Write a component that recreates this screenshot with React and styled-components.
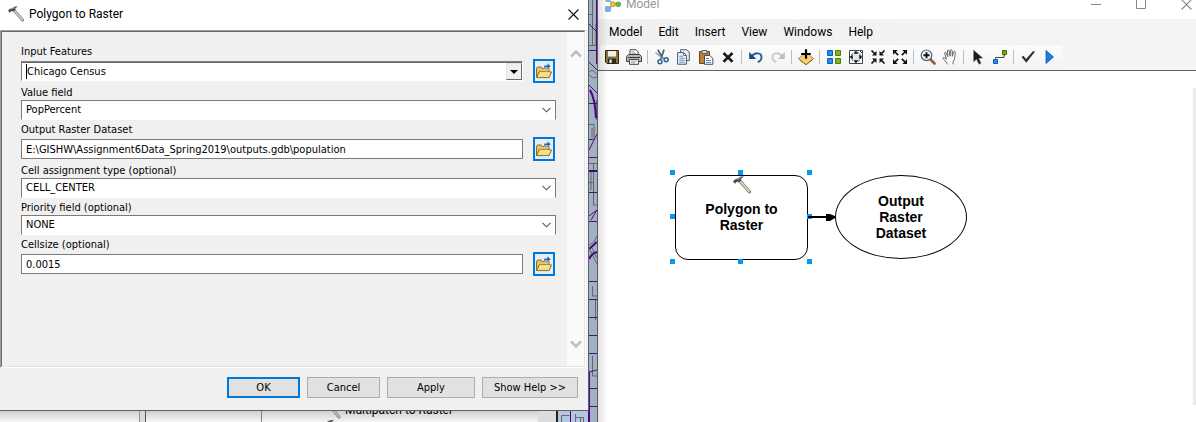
import React from "react";
import styled, { createGlobalStyle, css } from "styled-components";

const dialogFont = `"DejaVu Sans Condensed", "DejaVu Sans", Tahoma, sans-serif`;
const shellFont = `Roboto, "Segoe UI", sans-serif`;

const GlobalStyle = createGlobalStyle`
  *, *::before, *::after { box-sizing: border-box; }
  body { margin: 0; background: #fff; color: #000; font: 12px/16px ${shellFont}; }
  button, input, select { font: inherit; color: inherit; margin: 0; border-radius: 0; }
  svg { display: block; flex: none; }
`;

/* ---------- desktop ---------- */

const Desktop = styled.main`
  display: grid;
  grid-template-columns: minmax(0, 589fr) 9px minmax(0, 598fr);
  min-height: 100vh;
  overflow: hidden;
`;

const LeftPane = styled.div`
  display: flex;
  flex-direction: column;
  min-width: 0;
`;

const MapEdge = styled.div`
  position: relative;
  overflow: hidden;
  background: #a0b1c6;
  border-right: 1px solid #5c5c5c;
`;

const MapLines = styled.svg`
  position: absolute;
  inset: 0 auto auto 0;
`;

/* ---------- dialog ---------- */

const Dialog = styled.section`
  flex: 1;
  display: flex;
  flex-direction: column;
  background: #f0f0f0;
  border-right: 1px solid #5f6166;
  border-bottom: 1px solid #5f6166;
  font: 11px/14px ${dialogFont};
`;

const DialogTitleBar = styled.header`
  display: flex;
  align-items: center;
  gap: 5px;
  height: 30px;
  padding: 0 5px 2px 8px;
  background: #fff;
  font: 12px/16px ${shellFont};
`;

const DialogTitle = styled.h1`
  flex: 1;
  margin: 0;
  font: inherit;
`;

const CloseButton = styled.button`
  display: grid;
  place-items: center;
  width: 20px;
  height: 20px;
  padding: 0;
  border: 0;
  background: none;
`;

const DialogBody = styled.div`
  flex: 1;
  display: flex;
  margin-right: 2px;
  border: 1px solid;
  border-color: #a0a0a0 #fff #fff #a0a0a0;
`;

const DialogInset = styled.div`
  flex: 1;
  display: flex;
  border: 1px solid;
  border-color: #696969 #e3e3e3 #e3e3e3 #696969;
`;

const Form = styled.form`
  flex: 1;
  display: flex;
  flex-direction: column;
  gap: 3px;
  min-width: 0;
  padding: 13px 11px 16px 19px;
`;

const ScrollTrack = styled.div`
  display: flex;
  flex-direction: column;
  justify-content: space-between;
  align-items: center;
  width: 17px;
  padding: 17px 0;
  background: #fafafa;
`;

const Field = styled.div`
  display: flex;
  flex-direction: column;
`;

const Label = styled.label`
  height: 14px;
`;

const Row = styled.div`
  display: flex;
  align-items: center;
  gap: 10px;
  padding-right: 1px;
`;

const boxStyles = css`
  flex: 1;
  min-width: 0;
  height: 20px;
  padding: 0 4px;
  background: #fff;
  outline: 0;
`;

const TextBox = styled.input`
  ${boxStyles}
  border: 1px solid #7a7a7a;
`;

const ComboFrame = styled.div`
  flex: 1;
  display: flex;
  min-width: 0;
  height: 20px;
  border: 1px solid;
  border-color: #808080 #fff #fff #808080;
  background: #fff;
`;

const ComboInner = styled.div`
  flex: 1;
  display: flex;
  min-width: 0;
  border-top: 1px solid #696969;
`;

const Caret = styled.span`
  width: 1px;
  margin: 1px 0 1px 4px;
  background: #000;
`;

const ComboInput = styled.input`
  flex: 1;
  min-width: 0;
  padding: 0;
  border: 0;
  outline: 0;
  background: transparent;
`;

const ComboButton = styled.button`
  display: grid;
  place-items: center;
  width: 16px;
  padding: 0;
  border: 1px solid;
  border-color: #e3e3e3 #696969 #696969 #e3e3e3;
  background: #f0f0f0;
`;

const SelectFrame = styled.div`
  display: grid;
  align-items: center;
  height: 20px;

  & > * { grid-area: 1 / 1; }
  & > svg { justify-self: end; margin-right: 5px; pointer-events: none; }
`;

const Select = styled.select`
  ${boxStyles}
  appearance: none;
  width: 100%;
  border: 1px solid #7a7a7a;
  border-bottom-color: #fff;
`;

const BrowseButton = styled.button`
  display: grid;
  place-items: center;
  width: 22px;
  height: 24px;
  padding: 0;
  border: 2px solid #0078d7;
  background: #e5eef7;
`;

const DialogFooter = styled.footer`
  display: flex;
  justify-content: flex-end;
  gap: 7px;
  padding: 9px 10px 12px;
`;

const DialogButton = styled.button`
  width: ${({ $size }) => ({ small: 73, medium: 88, large: 96 })[$size]}px;
  height: 21px;
  padding: 0;
  border: ${({ $primary }) => ($primary ? "2px solid #0078d7" : "1px solid #adadad")};
  background: #e1e1e1;
`;

/* ---------- catalog tree behind the dialog ---------- */

const TreeStrip = styled.div`
  display: grid;
  grid-template-columns: 140fr 6fr 116fr 276fr 20fr 31fr;
  height: 11px;
  overflow: hidden;
  background: linear-gradient(#cfcfcf, #f6f6f6);
`;

const TreeCell = styled.div`
  display: flex;
  align-items: flex-end;
  min-width: 0;
  height: 11px;
  overflow: hidden;
  border-right: ${({ $edge }) => $edge || "0 solid transparent"};
  background: ${({ $fill }) => $fill || "transparent"};
`;

const TreeItem = styled.div`
  display: flex;
  align-items: flex-end;
  gap: 2px;
  padding-left: 64px;
  white-space: nowrap;
`;

const TreeText = styled.span`
  padding-bottom: 4px;
`;

/* ---------- model window ---------- */

const ModelWindow = styled.section`
  position: relative;
  display: flex;
  flex-direction: column;
  min-width: 0;
  background: #fff;

  &::after {
    content: "";
    position: absolute;
    inset: 0 auto 0 0;
    width: 10px;
    background: linear-gradient(to right, rgba(0, 0, 0, 0.11), transparent);
    pointer-events: none;
  }
`;

const ModelTitleClip = styled.header`
  display: flex;
  align-items: flex-end;
  height: 19px;
  overflow: hidden;
`;

const ModelTitleBar = styled.div`
  flex: 1;
  display: flex;
  align-items: center;
  gap: 5px;
  height: 30px;
  padding-left: 7px;
  color: #999;
`;

const ModelTitle = styled.h2`
  flex: 1;
  margin: 0;
  font: inherit;
`;

const WindowButtons = styled.div`
  display: flex;
  gap: 25px;
`;

const MenuBar = styled.nav`
  display: flex;
  align-items: center;
  gap: 16px;
  height: 26px;
  padding-left: 11px;
  background: linear-gradient(to right, #f0f0f0, #f5f5f5);
`;

const MenuItem = styled.button`
  padding: 0;
  border: 0;
  background: none;
`;

const ToolbarBand = styled.div`
  display: flex;
  height: 26px;
  padding-left: 2px;
  border-bottom: 1px solid #646464;
  background: linear-gradient(to right, #f0f0f0, #f5f5f5);
`;

const Toolbar = styled.div`
  display: flex;
  padding: 0 2px 1px 1px;
  align-items: center;
  border-radius: 3px;
  background: linear-gradient(#fcfcfc, #f3f3f3);
`;

const ToolButton = styled.button`
  display: grid;
  place-items: center;
  width: 22px;
  height: 24px;
  padding: 0;
  border: 0;
  background: none;
`;

const Separator = styled.span`
  width: 1px;
  height: 14px;
  margin: 0 3px 0 2px;
  background: #bdbdbd;
`;

const CanvasRow = styled.div`
  flex: 1;
  display: flex;
`;

const Canvas = styled.div`
  position: relative;
  flex: 1;
  min-height: 200px;
  overflow: hidden;
`;

const CanvasScroll = styled.div`
  width: 3px;
  margin: 17px 0;
  background: #ececec;
`;

const Node = styled.div`
  position: absolute;
  top: 104px;
  display: flex;
  flex-direction: column;
  align-items: center;
  border: 1px solid #000;
  font: bold 14px/16px "Liberation Sans", Arial, sans-serif;
  text-align: center;
`;

const ToolNode = styled(Node)`
  left: 77px;
  width: 133px;
  height: 85px;
  gap: 7px;
  border-radius: 13px;
`;

const DataNode = styled(Node)`
  left: 237px;
  width: 132px;
  height: 84px;
  justify-content: center;
  border-radius: 50%;
`;

const NodeText = styled.span`
  width: ${({ $wide }) => ($wide ? 90 : 64)}px;
`;

const Connector = styled.svg`
  position: absolute;
  left: 210px;
  top: 141px;
`;

const Handle = styled.i`
  position: absolute;
  left: ${({ $x }) => $x}px;
  top: ${({ $y }) => $y}px;
  width: 5px;
  height: 5px;
  background: #0a96f5;
`;

/* ---------- drawings ---------- */

const Svg = ({ size = 16, children }) => (
  <svg width={size} height={size} viewBox="0 0 16 16" fill="none" aria-hidden="true">
    {children}
  </svg>
);

const Hammer = ({ size }) => (
  <Svg size={size}>
    <path d="M6.2 4.6 14.6 14" stroke="#8a7f6d" strokeWidth="3" strokeLinecap="round" />
    <path d="M6.4 4.8 14.4 13.7" stroke="#d9cfbd" strokeWidth="1.6" strokeLinecap="round" />
    <path d="M0 4.8 1.6 3l2-.6L6.8.4 10 .5 7.6 2 7 4.4 4.8 5.6 3.6 4.8l-1.8 2z" fill="#4a4d50" />
    <path d="M3.6 3 7 1.4" stroke="#999" />
  </Svg>
);

const Cross = ({ color = "#111" }) => (
  <svg width="11" height="11" viewBox="0 0 11 11" fill="none" aria-hidden="true">
    <path d="m.5.5 10 10m0-10-10 10" stroke={color} strokeWidth="1.1" />
  </svg>
);

const ScrollChevron = ({ down }) => (
  <svg width="12" height="9" viewBox="0 0 12 9" fill="none" aria-hidden="true">
    <path d={down ? "M1 1.5 6 6.5 11 1.5" : "M1 7.5 6 2.5 11 7.5"} stroke="#bfbfbf" strokeWidth="2.6" />
  </svg>
);

const SelectChevron = () => (
  <svg width="9" height="6" viewBox="0 0 9 6" fill="none" aria-hidden="true">
    <path d="m.5.8 4 4 4-4" stroke="#555" strokeWidth="1.1" />
  </svg>
);

const FolderOpen = () => (
  <svg width="18" height="18" viewBox="0 0 18 18" fill="none" aria-hidden="true">
    <path d="M1.500 15.500V6.200l1-1.200h3.600l1.200 1.500h6.700v3" fill="#e2c463" stroke="#8a6d1d" />
    <path d="m1.600 15.600 2.600-5.700h12.300l-2.400 5.700z" fill="#f8dc86" stroke="#8a6d1d" />
    <path d="M4.800 10.900h10" stroke="#fff3c0" />
    <path d="M9 6.500V4.700q0-1.400 1.400-1.400h1.800V1l3.600 3.200-3.600 3V5.200h-1.500v1.300z" fill="#155a9c" stroke="#e5eef7" strokeWidth=".5" />
  </svg>
);

const ModelLogo = () => (
  <Svg>
    <path d="M3 4.5 9 8M3.500 13 9 8.500M9 8h5" stroke="#555" />
    <rect x=".5" y="1" width="5" height="5" rx="1" fill="#7fb2ea" />
    <rect x=".5" y="10.5" width="5" height="5" rx="1" fill="#79b1ec" stroke="#4d88c9" strokeWidth=".6" />
    <circle cx="8" cy="8.2" r="2.5" fill="#f0c243" stroke="#b68613" strokeWidth=".7" />
    <circle cx="13.3" cy="8.3" r="2.4" fill="#69b94b" stroke="#3e8a26" strokeWidth=".7" />
  </Svg>
);

const icons = {
  Save: (
    <Svg>
      <path d="M1.5 1.5h13v13H3l-1.500-1.500z" fill="#8a7840" stroke="#2d2712" />
      <path d="M4 2h8v5.500H4z" fill="#f2f0e6" />
      <path d="M4 9.500h8V14H4z" fill="#2d2a20" />
      <path d="M5.500 10.500h2.200V14H5.500z" fill="#eee" />
    </Svg>
  ),
  Print: (
    <Svg>
      <path d="M4 6V.7h6L12.200 3v3" fill="#fff" stroke="#444" />
      <path d="M5.500 3h3M5.500 4.800h5" stroke="#777" strokeWidth=".8" />
      <path d="M.6 7.500 2.500 5.500h11l2 2V12.500H.6z" fill="#b9b9b9" stroke="#3c3c3c" />
      <path d="M2 8.500h12" stroke="#333" />
      <path d="M3.500 10.500h9v4.800h-9z" fill="#fff" stroke="#444" />
      <path d="M5 12.200h6M5 13.800h4" stroke="#888" strokeWidth=".8" />
      <path d="M12.500 7h1.500" stroke="#d5a62d" />
    </Svg>
  ),
  Cut: (
    <Svg>
      <path d="m3.800.8 5.400 9M10 .8 6.800 10" stroke="#555b63" strokeWidth="1.700" />
      <path d="M1.500 3.500 9.500 10" stroke="#8f969e" strokeWidth="1.300" />
      <circle cx="6" cy="12.800" r="2" stroke="#2b6898" strokeWidth="1.500" />
      <circle cx="12.200" cy="10.800" r="2" stroke="#2b6898" strokeWidth="1.500" />
    </Svg>
  ),
  Copy: (
    <Svg>
      <path d="M4.600.7h6.200l2.500 2.500v8.400H4.600z" fill="#e9f1fa" stroke="#4d6074" />
      <path d="M1.600 3.700h6.200l2.600 2.500v9H1.600z" fill="#fff" stroke="#3f5368" />
      <path d="M3.200 7.200h4M3.200 9.200h5.600M3.200 11.200h5.600M3.200 13.200h5.600" stroke="#5a89ba" />
      <path d="M7.600 4v2.500h2.600" stroke="#3f5368" strokeWidth=".8" />
    </Svg>
  ),
  Paste: (
    <Svg>
      <path d="M1.500 2.500h10v12h-10z" fill="#bd8238" stroke="#704616" />
      <path d="M4 1.500h5v3H4z" fill="#d8d8d8" stroke="#555" strokeWidth=".9" />
      <path d="M6.500 6.500h5.300l3 2.800v6H6.500z" fill="#fff" stroke="#3f5368" />
      <path d="M8 9.500h3M8 11.500h5M8 13.500h5" stroke="#5a89ba" />
    </Svg>
  ),
  Delete: (
    <Svg>
      <path d="m3.500 4 9 8.800M12.500 4l-9 8.800" stroke="#1b1b1b" strokeWidth="2.600" />
    </Svg>
  ),
  Undo: (
    <Svg>
      <path d="M4 7.500C6.500 3 13.500 3.300 13.500 8.200c0 2.500-1.500 4-3.700 5" stroke="#1f5f9e" strokeWidth="1.900" />
      <path d="M1.200 3v7h7z" fill="#134b85" />
    </Svg>
  ),
  Redo: (
    <Svg>
      <path d="M12 7.500C9.500 3 2.500 3.300 2.500 8.200c0 2.500 1.500 4 3.700 5" stroke="#c9c9c9" strokeWidth="1.900" />
      <path d="M14.800 3v7h-7z" fill="#bfbfbf" />
    </Svg>
  ),
  "Add Data": (
    <Svg>
      <path d="M8 3.500 15.600 9.500 8 15.600.4 9.500z" fill="#f5d078" stroke="#b98f38" />
      <path d="M1 10.200 8 15.800 15 10.200" stroke="#8d6a22" />
      <path d="M8 .3v9.400M3.200 5h9.600" stroke="#000" strokeWidth="2.200" />
    </Svg>
  ),
  "Auto Layout": (
    <Svg>
      <path d="M1.500 1.500h5v5h-5zM1.500 9.500h5v5h-5z" fill="#2090f5" stroke="#0a5fb4" />
      <path d="M9.500 1.500h5v5h-5zM9.500 9.500h5v5h-5z" fill="#7dbb13" stroke="#4c7b08" />
    </Svg>
  ),
  "Full Extent": (
    <Svg>
      <path d="M1.500 1.500h10l3 3v10h-13z" fill="#fff" stroke="#444" />
      <circle cx="8" cy="8" r="5" fill="#dfeaf2" stroke="#666" strokeDasharray="2 1.500" />
      <path d="m8 1.800 2.400 2.900H5.600zM8 14.200l2.400-2.900H5.600zM1.800 8l2.900-2.400v4.800zM14.200 8l-2.900-2.400v4.800z" fill="#111" />
      <path d="M12 1.500h2.500V4" stroke="#444" />
    </Svg>
  ),
  "Fixed Zoom In": (
    <Svg>
      <path d="m1.500 1.500 3 3M14.500 1.500l-3 3M1.500 14.500l3-3M14.500 14.500l-3-3" stroke="#111" strokeWidth="1.700" />
      <path d="M6.500 2v4.500H2zM9.500 2v4.500H14zM6.500 14V9.500H2zM9.500 14V9.500H14z" fill="#111" />
    </Svg>
  ),
  "Fixed Zoom Out": (
    <Svg>
      <path d="m3 3 3.200 3.200M13 3 9.800 6.200M3 13l3.200-3.200M13 13 9.800 9.800" stroke="#111" strokeWidth="1.700" />
      <path d="M1 1v4.700L5.700 1zM15 1v4.700L10.300 1zM1 15v-4.700L5.700 15zM15 15v-4.700L10.300 15z" fill="#111" />
    </Svg>
  ),
  Zoom: (
    <Svg>
      <path d="m10.500 10.500 4 4" stroke="#99593e" strokeWidth="2.700" strokeLinecap="round" />
      <circle cx="6.500" cy="6.300" r="5.300" fill="#eef5fa" stroke="#54626d" strokeWidth="1.200" />
      <path d="M6.500 3.300v6M3.500 6.300h6" stroke="#111" strokeWidth="1.900" />
    </Svg>
  ),
  Pan: (
    <Svg>
      <path
        d="M5.500 15.300C4.300 12.500 2.500 11.300 1 9.600c-.3-1.200 1-1.500 2-.6l1.500 1.200L2.600 4.300c-.2-1.200 1.200-1.500 1.700-.3l1.600 3.700L5.400 2c0-1.300 1.600-1.300 1.800 0l.9 5.200.3-5.600c.2-1.200 1.800-1.100 1.800.2l.1 5.600 1.300-4.500c.5-1.100 1.900-.6 1.700.5-.5 3.600-.2 7-2.300 9.400v2.500"
        fill="#fff" stroke="#555" strokeWidth=".9" />
    </Svg>
  ),
  Select: (
    <Svg>
      <path d="M3.500 1v12l3-2.700 2.400 5 2.200-1.100-2.300-4.800 4-.4z" fill="#1c1c1c" stroke="#888" strokeWidth=".5" />
    </Svg>
  ),
  Connect: (
    <Svg>
      <path d="M3.500 10V8.500H12V5" stroke="#444" />
      <path d="M3.500 10V8M12.500 7V5" stroke="#e03030" />
      <path d="M1.500 10.500h4v4h-4z" fill="#2090f5" stroke="#0a5fb4" />
      <path d="M10.500 1.500h4v4h-4z" fill="#6cae12" stroke="#3f6f06" />
    </Svg>
  ),
  Validate: (
    <Svg>
      <path d="m1.500 8 2-1.200L6 10l7.200-8 1.800.8L6.300 13.800z" fill="#333" />
    </Svg>
  ),
  Run: (
    <Svg>
      <path d="M4 1.500v13L11.500 8z" fill="#1c7fe6" stroke="#0b55a8" strokeWidth=".8" />
    </Svg>
  ),
};

/* ---------- data ---------- */

const toolGroups = [
  ["Save", "Print"],
  ["Cut", "Copy", "Paste", "Delete"],
  ["Undo", "Redo"],
  ["Add Data"],
  ["Auto Layout", "Full Extent", "Fixed Zoom In", "Fixed Zoom Out"],
  ["Zoom", "Pan"],
  ["Select", "Connect"],
  ["Validate", "Run"],
];

const menus = ["Model", "Edit", "Insert", "View", "Windows", "Help"];

const fields = [
  { id: "features", kind: "combo", label: "Input Features", value: "Chicago Census" },
  { id: "value", kind: "select", label: "Value field", value: "PopPercent" },
  {
    id: "output",
    kind: "text",
    label: "Output Raster Dataset",
    value: "E:\\GISHW\\Assignment6Data_Spring2019\\outputs.gdb\\population",
  },
  { id: "assignment", kind: "select", label: "Cell assignment type (optional)", value: "CELL_CENTER" },
  { id: "priority", kind: "select", label: "Priority field (optional)", value: "NONE" },
  { id: "cellsize", kind: "text", label: "Cellsize (optional)", value: "0.0015" },
];

const handles = [
  [72, 99], [140, 99], [209, 99],
  [72, 143], [209, 143],
  [72, 188], [140, 188], [209, 188],
];

/* ---------- parts ---------- */

function Control({ id, kind, value }) {
  if (kind === "select") {
    return (
      <SelectFrame>
        <Select id={id} defaultValue={value}>
          <option>{value}</option>
        </Select>
        <SelectChevron />
      </SelectFrame>
    );
  }
  return (
    <Row>
      {kind === "combo" ? (
        <ComboFrame>
          <ComboInner>
            <Caret />
            <ComboInput id={id} defaultValue={value} />
            <ComboButton type="button" aria-label="Show layers">
              <svg width="8" height="4" viewBox="0 0 8 4" aria-hidden="true">
                <path d="M0 0h8L4 4z" />
              </svg>
            </ComboButton>
          </ComboInner>
        </ComboFrame>
      ) : (
        <TextBox id={id} defaultValue={value} />
      )}
      <BrowseButton type="button" aria-label="Browse">
        <FolderOpen />
      </BrowseButton>
    </Row>
  );
}

function ToolDialog() {
  return (
    <Dialog>
      <DialogTitleBar>
        <Hammer />
        <DialogTitle>Polygon to Raster</DialogTitle>
        <CloseButton aria-label="Close">
          <Cross />
        </CloseButton>
      </DialogTitleBar>
      <DialogBody>
        <DialogInset>
          <Form>
            {fields.map((f) => (
              <Field key={f.id}>
                <Label htmlFor={f.id}>{f.label}</Label>
                <Control {...f} />
              </Field>
            ))}
          </Form>
          <ScrollTrack>
            <ScrollChevron />
            <ScrollChevron down />
          </ScrollTrack>
        </DialogInset>
      </DialogBody>
      <DialogFooter>
        <DialogButton $size="small" $primary>OK</DialogButton>
        <DialogButton $size="small">Cancel</DialogButton>
        <DialogButton $size="medium">Apply</DialogButton>
        <DialogButton $size="large">Show Help &gt;&gt;</DialogButton>
      </DialogFooter>
    </Dialog>
  );
}

function CatalogTree() {
  return (
    <TreeStrip>
      <TreeCell $edge="1px solid #8d8f94" />
      <TreeCell $edge="1px solid #555" $fill="#d9d9d9" />
      <TreeCell $edge="1px solid #7f838a" />
      <TreeCell>
        <TreeItem>
          <svg width="17" height="11" viewBox="0 0 17 11" fill="none" aria-hidden="true">
            <path d="m8 0 5 6" stroke="#857b6b" strokeWidth="3" strokeLinecap="round" />
            <path d="m8 0 5 6" stroke="#d3c9b7" strokeWidth="1.400" strokeLinecap="round" />
            <path d="m1 11 2-1.500 5-.8-2 2.300z" fill="#55585b" />
          </svg>
          <TreeText>Multipatch to Raster</TreeText>
        </TreeItem>
      </TreeCell>
      <TreeCell $edge="2px solid #222" $fill="#dcdcdc" />
      <TreeCell $fill="#b3c8e0">
        <svg width="31" height="11" viewBox="0 0 31 11" fill="none" aria-hidden="true">
          <path d="M3.500 11V4.500h8M17.500 3v8M17.500 6.500h8V11M22.500 6.500V11" stroke="#6a6a6a" />
          <path d="M12.500 0v11M30.500 0v11" stroke="#55007f" />
        </svg>
      </TreeCell>
    </TreeStrip>
  );
}

function ModelBuilder() {
  return (
    <ModelWindow>
      <ModelTitleClip>
        <ModelTitleBar>
          <ModelLogo />
          <ModelTitle>Model</ModelTitle>
          <WindowButtons>
            <CloseButton aria-label="Minimize">
              <svg width="10" height="3" viewBox="0 0 10 3" aria-hidden="true">
                <path d="M0 1h10v1H0z" fill="#888" />
              </svg>
            </CloseButton>
            <CloseButton aria-label="Maximize">
              <svg width="10" height="10" viewBox="0 0 10 10" fill="none" aria-hidden="true">
                <path d="M.5.5h9v9h-9z" stroke="#888" />
              </svg>
            </CloseButton>
            <CloseButton aria-label="Close">
              <Cross color="#888" />
            </CloseButton>
          </WindowButtons>
        </ModelTitleBar>
      </ModelTitleClip>
      <MenuBar>
        {menus.map((m) => (
          <MenuItem key={m}>{m}</MenuItem>
        ))}
      </MenuBar>
      <ToolbarBand>
        <Toolbar>
          {toolGroups.map((group, i) => (
            <React.Fragment key={group[0]}>
              {i > 0 && <Separator />}
              {group.map((name) => (
                <ToolButton key={name} aria-label={name}>
                  {icons[name]}
                </ToolButton>
              ))}
            </React.Fragment>
          ))}
        </Toolbar>
      </ToolbarBand>
      <CanvasRow>
        <Canvas>
          <ToolNode>
            <Hammer size={18} />
            <NodeText $wide>Polygon to Raster</NodeText>
          </ToolNode>
          <DataNode>
            <NodeText>Output Raster Dataset</NodeText>
          </DataNode>
          {handles.map(([x, y]) => (
            <Handle key={`${x}-${y}`} $x={x} $y={y} />
          ))}
          <Connector width="28" height="10" viewBox="0 0 28 10" aria-hidden="true">
            <path d="M0 4h18V2h4l6 2.500v1L22 9h-4V6H0z" />
          </Connector>
        </Canvas>
        <CanvasScroll />
      </CanvasRow>
    </ModelWindow>
  );
}

function MapBackdrop() {
  return (
    <MapEdge>
      <MapLines width="8" height="422" viewBox="0 0 8 422" fill="none" aria-hidden="true">
        <path
          d="M3.500 0v45M0 14.500h3M0 45.500h7V24M0 72l3-2 5 4M0 75l4 3 4-1M0 124.500h5V140M3 128v10M2 170v20M0 163.500h8M4.500 163v42h4M0 182.500h4M0 245l5-3 3-6M1 250l7 14M3 248l5 10M3.500 286v10h5M6.500 300v20M3.500 356v20h5M7.500 100v20"
          stroke="#666" />
        <path
          d="M7.500 0v64M0 50.500h8M0 24l8 8M0 62l8 8M0 85l8 8M0 103.500h8M0 139.500h4M0 157.500h8M8 134l-4 8-4 8M0 192.500h8M0 216l8-6M0 221.500h8M8 210l-6 10M0 281.500h8M0 299.500h8M0 317.500h8M0 335.500h8M0 353.500h8M0 372l8-2M0 388.500h8M0 406.500h8M.5 372v50"
          stroke="#520a80" />
        <path d="M1 90q5 8 6 28M0 171h8M0 259q3-6 8-7M0 249l8-7" stroke="#4b0082" strokeWidth="2" />
      </MapLines>
    </MapEdge>
  );
}

export default function App() {
  return (
    <>
      <GlobalStyle />
      <Desktop>
        <LeftPane>
          <ToolDialog />
          <CatalogTree />
        </LeftPane>
        <MapBackdrop />
        <ModelBuilder />
      </Desktop>
    </>
  );
}
